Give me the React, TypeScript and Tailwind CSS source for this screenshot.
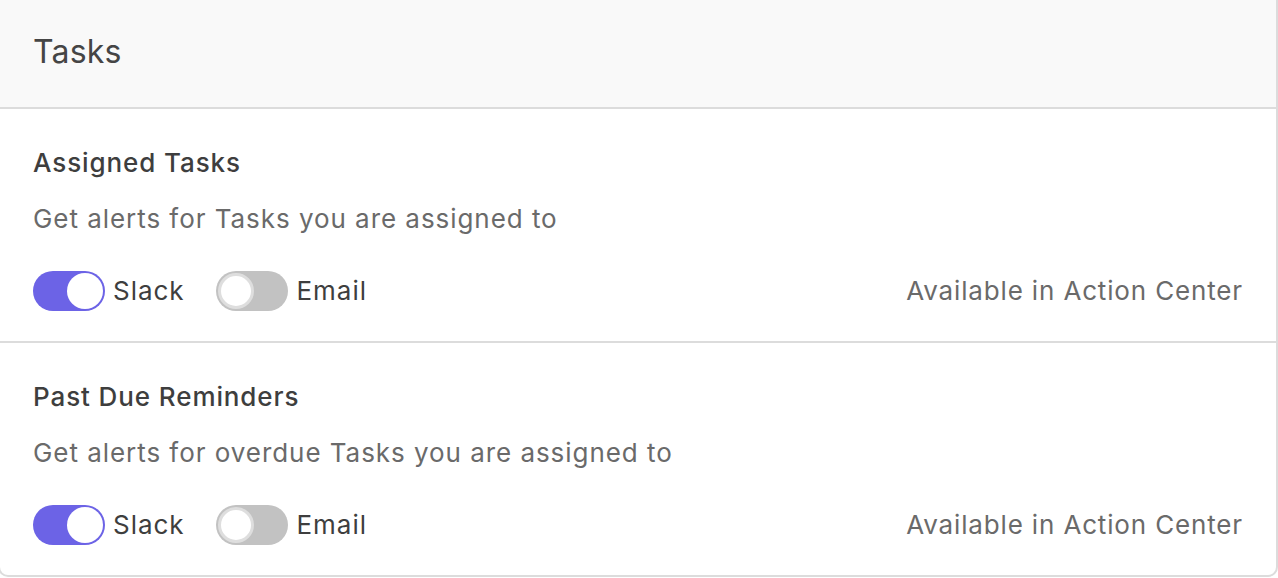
import React from "react";

function Toggle({ on }: { on: boolean }) {
  return (
    <div
      className={
        "flex h-[40px] w-[72px] shrink-0 items-center rounded-full p-[2px] " +
        (on ? "justify-end bg-[#6c63e6]" : "justify-start bg-[#c2c2c2]")
      }
    >
      <div
        className={
          "h-[36px] w-[36px] rounded-full bg-white " +
          (on ? "" : "border-[3px] border-[#dedede]")
        }
      />
    </div>
  );
}

function Section({ title, desc, last }: { title: string; desc: string; last?: boolean }) {
  return (
    <div className={"pl-[33px] pr-[33px] pt-[37px] pb-[30px] " + (last ? "" : "border-b-2 border-[#dcdcdc]")}>
      <div className="text-[26px] leading-[34px] font-medium tracking-[0.9px] text-[#3e3e3e]">{title}</div>
      <div className="mt-[22px] text-[26px] leading-[34px] tracking-[0.95px] text-[#6a6a6a]">{desc}</div>
      <div className="mt-[35px] flex items-center">
        <Toggle on />
        <span className="ml-[8px] text-[26px] leading-[34px] tracking-[0.95px] text-[#3e3e3e]">Slack</span>
        <div className="ml-[32px]" />
        <Toggle on={false} />
        <span className="ml-[8px] text-[26px] leading-[34px] tracking-[1px] text-[#3e3e3e]">Email</span>
        <span className="ml-auto text-[26px] leading-[34px] tracking-[0.85px] text-[#6a6a6a]">Available in Action Center</span>
      </div>
    </div>
  );
}

export default function App() {
  return (
    <div className="h-[578px] w-[1278px] bg-white" style={{ fontFamily: "Inter, 'Noto Sans', sans-serif" }}>
      <div className="ml-[-2px] w-[1280px] overflow-hidden rounded-b-[10px] border-2 border-t-0 border-[#dcdcdc] bg-white">
        <div className="flex h-[109px] items-center border-b-2 border-[#dcdcdc] bg-[#f9f9f9] px-[33px] pb-[3px]">
          <span className="text-[32px] tracking-[0.2px] text-[#454545]">Tasks</span>
        </div>
        <Section title="Assigned Tasks" desc="Get alerts for Tasks you are assigned to" />
        <Section title="Past Due Reminders" desc="Get alerts for overdue Tasks you are assigned to" last />
      </div>
    </div>
  );
}
